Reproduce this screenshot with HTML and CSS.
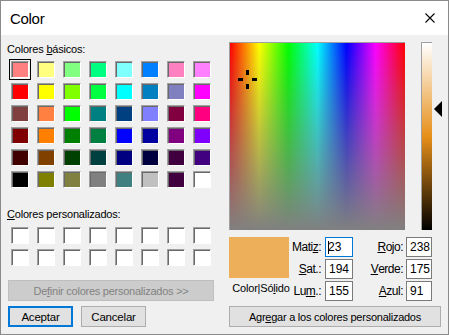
FILE: index.html
```html
<!DOCTYPE html>
<html lang="es">

<head>
    <meta charset="UTF-8">
    <meta name="viewport" content="width=device-width, initial-scale=1.0">
    <title>Color</title>
    <link rel="stylesheet" href="styles.css">
</head>

<body>
    <div class="dialog">
        <div class="titlebar">
            <span class="title">Color</span>
            <svg class="close" width="10" height="10" viewBox="0 0 10 10">
                <path d="M0.5 0.5 L9.5 9.5 M9.5 0.5 L0.5 9.5" stroke="#000" stroke-width="1.1" fill="none"/>
            </svg>
        </div>
        <div class="content">
            <div class="left">
                <div class="label">Colores <u>b</u>ásicos:</div>
                <div class="swatches">
                    <div class="swatch selected" style="background:#ff8080"></div>
                    <div class="swatch" style="background:#ffff80"></div>
                    <div class="swatch" style="background:#80ff80"></div>
                    <div class="swatch" style="background:#00ff80"></div>
                    <div class="swatch" style="background:#80ffff"></div>
                    <div class="swatch" style="background:#0080ff"></div>
                    <div class="swatch" style="background:#ff80c0"></div>
                    <div class="swatch" style="background:#ff80ff"></div>

                    <div class="swatch" style="background:#ff0000"></div>
                    <div class="swatch" style="background:#ffff00"></div>
                    <div class="swatch" style="background:#80ff00"></div>
                    <div class="swatch" style="background:#00ff40"></div>
                    <div class="swatch" style="background:#00ffff"></div>
                    <div class="swatch" style="background:#0080c0"></div>
                    <div class="swatch" style="background:#8080c0"></div>
                    <div class="swatch" style="background:#ff00ff"></div>

                    <div class="swatch" style="background:#804040"></div>
                    <div class="swatch" style="background:#ff8040"></div>
                    <div class="swatch" style="background:#00ff00"></div>
                    <div class="swatch" style="background:#008080"></div>
                    <div class="swatch" style="background:#004080"></div>
                    <div class="swatch" style="background:#8080ff"></div>
                    <div class="swatch" style="background:#800040"></div>
                    <div class="swatch" style="background:#ff0080"></div>

                    <div class="swatch" style="background:#800000"></div>
                    <div class="swatch" style="background:#ff8000"></div>
                    <div class="swatch" style="background:#008000"></div>
                    <div class="swatch" style="background:#008040"></div>
                    <div class="swatch" style="background:#0000ff"></div>
                    <div class="swatch" style="background:#0000a0"></div>
                    <div class="swatch" style="background:#800080"></div>
                    <div class="swatch" style="background:#8000ff"></div>

                    <div class="swatch" style="background:#400000"></div>
                    <div class="swatch" style="background:#804000"></div>
                    <div class="swatch" style="background:#004000"></div>
                    <div class="swatch" style="background:#004040"></div>
                    <div class="swatch" style="background:#000080"></div>
                    <div class="swatch" style="background:#000040"></div>
                    <div class="swatch" style="background:#400040"></div>
                    <div class="swatch" style="background:#400080"></div>

                    <div class="swatch" style="background:#000000"></div>
                    <div class="swatch" style="background:#808000"></div>
                    <div class="swatch" style="background:#808040"></div>
                    <div class="swatch" style="background:#808080"></div>
                    <div class="swatch" style="background:#408080"></div>
                    <div class="swatch" style="background:#c0c0c0"></div>
                    <div class="swatch" style="background:#400040"></div>
                    <div class="swatch" style="background:#ffffff"></div>
                </div>

                <div class="label label-custom"><u>C</u>olores personalizados:</div>
                <div class="swatches custom">
                    <div class="swatch"></div><div class="swatch"></div><div class="swatch"></div><div class="swatch"></div>
                    <div class="swatch"></div><div class="swatch"></div><div class="swatch"></div><div class="swatch"></div>
                    <div class="swatch"></div><div class="swatch"></div><div class="swatch"></div><div class="swatch"></div>
                    <div class="swatch"></div><div class="swatch"></div><div class="swatch"></div><div class="swatch"></div>
                </div>

                <button class="btn btn-disabled btn-define">De<u>f</u>inir colores personalizados &gt;&gt;</button>

                <div class="actions">
                    <button class="btn btn-default">Aceptar</button>
                    <button class="btn">Cancelar</button>
                </div>
            </div>

            <div class="right">
                <div class="picker">
                    <div class="spectrum">
                        <svg class="cross" width="20" height="20" viewBox="0 0 20 20">
                            <rect x="8" y="0" width="3" height="5" fill="#000"/>
                            <rect x="8" y="14" width="3" height="5" fill="#000"/>
                            <rect x="0" y="8" width="5" height="3" fill="#000"/>
                            <rect x="14" y="8" width="5" height="3" fill="#000"/>
                        </svg>
                    </div>
                    <div class="lum-wrap">
                        <div class="lum"></div>
                        <div class="lum-arrow"></div>
                    </div>
                </div>

                <div class="values">
                    <div class="preview">
                        <div class="preview-box"></div>
                        <div class="preview-text">Color|Só<u>l</u>ido</div>
                    </div>
                    <div class="fields">
                        <label class="fld-label">Mati<u>z</u>:</label>
                        <div class="fld fld-focus"><span class="caret"></span>23</div>
                        <label class="fld-label"><u>R</u>ojo:</label>
                        <div class="fld">238</div>

                        <label class="fld-label"><u>S</u>at.:</label>
                        <div class="fld">194</div>
                        <label class="fld-label"><u>V</u>erde:</label>
                        <div class="fld">175</div>

                        <label class="fld-label">Lu<u>m</u>.:</label>
                        <div class="fld">155</div>
                        <label class="fld-label"><u>A</u>zul:</label>
                        <div class="fld">91</div>
                    </div>
                </div>

                <button class="btn btn-add">Agr<u>e</u>gar a los colores personalizados</button>
            </div>
        </div>
    </div>
</body>

</html>
```

FILE: styles.css
```css
body {
    margin: 0;
    background-color: #f0f0f0;
    font-family: "Liberation Sans", Arial, sans-serif;
    font-size: 11px;
    color: #000000;
}

u {
    text-decoration: underline;
    text-underline-offset: 1px;
}

.dialog {
    width: 449px;
    height: 335px;
    box-sizing: border-box;
    border: 1px solid #8a8a8a;
    display: flex;
    flex-direction: column;
    background-color: #f0f0f0;
}

.titlebar {
    height: 34px;
    flex: none;
    background-color: #ffffff;
    display: flex;
    align-items: center;
    justify-content: space-between;
    padding: 0 13px 0 9px;
}

.title {
    font-size: 15px;
    letter-spacing: -0.3px;
    margin-top: 1px;
}

.close {
    display: block;
}

.content {
    flex: 1;
    display: flex;
}

/* left column */

.left {
    width: 221px;
    padding: 7px 0 0 7px;
}

.label {
    line-height: 15px;
    margin-left: -1px;
    letter-spacing: -0.2px;
}

.label-custom {
    margin-top: 19px;
}

.swatches {
    display: grid;
    grid-template-columns: repeat(8, 18px);
    grid-auto-rows: 17px;
    column-gap: 8px;
    row-gap: 5px;
    margin: 4px 0 0 3px;
}

.swatches.custom {
    margin-top: 5px;
}

.swatch {
    box-sizing: border-box;
    border: 1px solid;
    border-color: #a0a0a0 #ffffff #ffffff #a0a0a0;
    box-shadow: inset 1px 1px 0 #696969;
    background-color: #ffffff;
}

.swatch.selected {
    outline: 1px solid #000000;
    outline-offset: 1px;
}

.btn {
    box-sizing: border-box;
    height: 21px;
    padding: 0;
    background-color: #e1e1e1;
    border: 1px solid #adadad;
    font-family: inherit;
    font-size: 11px;
    letter-spacing: -0.25px;
    color: #000000;
}

.btn-define {
    display: block;
    width: 206px;
    margin-top: 14px;
}

.btn-disabled {
    background-color: #cccccc;
    border-color: #bfbfbf;
    color: #838383;
}

.actions {
    display: flex;
    gap: 8px;
    margin-top: 5px;
}

.actions .btn {
    width: 65px;
    font-size: 11.5px;
    letter-spacing: -0.2px;
}

.btn-default {
    border-color: #0078d7;
    box-shadow: inset 0 0 0 1px #0078d7;
}

/* right column */

.right {
    padding-top: 7px;
}

.picker {
    display: flex;
    gap: 16px;
}

.spectrum {
    position: relative;
    width: 176px;
    height: 188px;
    box-sizing: border-box;
    border-top: 1px solid #a0a0a0;
    border-left: 1px solid #a0a0a0;
    background:
        linear-gradient(to bottom, rgba(128, 128, 128, 0), #808080),
        linear-gradient(to right, #ff0000, #ffff00 16.7%, #00ff00 33.3%, #00ffff 50%, #0000ff 66.7%, #ff00ff 83.3%, #ff0000);
}

.cross {
    position: absolute;
    left: 8px;
    top: 27px;
}

.lum-wrap {
    position: relative;
    width: 11px;
}

.lum {
    height: 188px;
    box-sizing: border-box;
    border-top: 1px solid #a0a0a0;
    border-left: 1px solid #a0a0a0;
    background: linear-gradient(to bottom, #ffffff, hsl(34.5, 81%, 50%) 50%, #000000);
}

.lum-arrow {
    position: absolute;
    left: 13px;
    top: 59px;
    width: 0;
    height: 0;
    border-top: 8px solid transparent;
    border-bottom: 8px solid transparent;
    border-right: 8px solid #000000;
}

.values {
    display: flex;
    margin-top: 7px;
}

.preview {
    width: 64px;
}

.preview-box {
    width: 60px;
    height: 41px;
    background-color: #eeaf5b;
}

.preview-text {
    margin-top: 4px;
    text-align: center;
    line-height: 13px;
    letter-spacing: -0.2px;
}

.fields {
    display: grid;
    grid-template-columns: 32px 28px 53px 26px;
    grid-auto-rows: 20px;
    row-gap: 2px;
}

.fld-label {
    display: flex;
    align-items: center;
    justify-content: flex-end;
    padding-right: 4px;
    font-size: 12px;
    letter-spacing: -0.5px;
}

.fld-label:nth-of-type(even) {
    padding-right: 3px;
}

.fld {
    box-sizing: border-box;
    background-color: #ffffff;
    border: 1px solid #7a7a7a;
    padding-left: 3px;
    font-size: 12px;
    line-height: 18px;
    display: flex;
    align-items: center;
}

.fld-focus {
    border-color: #0078d7;
}

.caret {
    width: 1px;
    height: 13px;
    background-color: #000000;
    margin: 0 -1px 0 -1px;
}

.btn-add {
    display: block;
    width: 212px;
    margin-top: 5px;
}
```
